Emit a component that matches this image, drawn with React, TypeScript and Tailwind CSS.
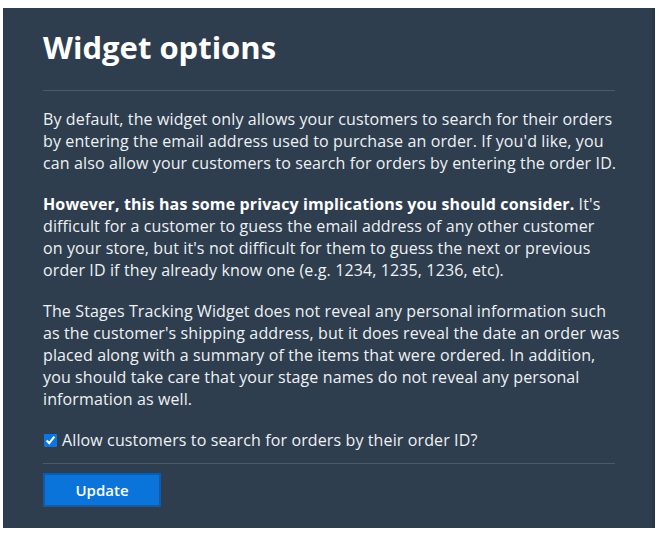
import React from "react";

export default function App() {
  return (
    <div className="w-full h-[538px] bg-white pt-[8px] pl-[3px]" style={{ fontFamily: '"Open Sans", "Noto Sans", sans-serif' }}>
      <div className="w-[652px] h-[520px] bg-[#2f3e4f] border-r-[3px] border-[#283746] pl-[40px] pr-[37px] pt-[20px] text-[#eef1f4]">
        <h1 className="text-[31px] leading-[38px] font-bold text-white">Widget options</h1>
        <div className="mt-[24px] h-px bg-[#4a5a6b]" />
        <div className="pt-[17px] text-[16px] leading-[22px] tracking-[0.12px] whitespace-nowrap">
          <p className="mb-[19px]">
            By default, the widget only allows your customers to search for their orders
            <br />
            by entering the email address used to purchase an order. If you'd like, you
            <br />
            can also allow your customers to search for orders by entering the order ID.
          </p>
          <p className="mb-[19px]">
            <strong className="font-bold text-white">However, this has some privacy implications you should consider.</strong> It's
            <br />
            difficult for a customer to guess the email address of any other customer
            <br />
            on your store, but it's not difficult for them to guess the next or previous
            <br />
            order ID if they already know one (e.g. 1234, 1235, 1236, etc).
          </p>
          <p className="mb-[19px]">
            The Stages Tracking Widget does not reveal any personal information such
            <br />
            as the customer's shipping address, but it does reveal the date an order was
            <br />
            placed along with a summary of the items that were ordered. In addition,
            <br />
            you should take care that your stage names do not reveal any personal
            <br />
            information as well.
          </p>
          <label className="flex items-center gap-[5px] mt-[1px]">
            <input type="checkbox" defaultChecked className="w-[13px] h-[13px] accent-[#0b75e1] ml-[1px]" />
            <span>Allow customers to search for orders by their order ID?</span>
          </label>
        </div>
        <div className="mt-[12px] h-px bg-[#4a5a6b]" />
        <button className="mt-[9px] w-[118px] h-[34px] bg-[#0a74da] border-2 border-[#0b5cae] text-white text-[15px] font-semibold">
          Update
        </button>
      </div>
    </div>
  );
}
